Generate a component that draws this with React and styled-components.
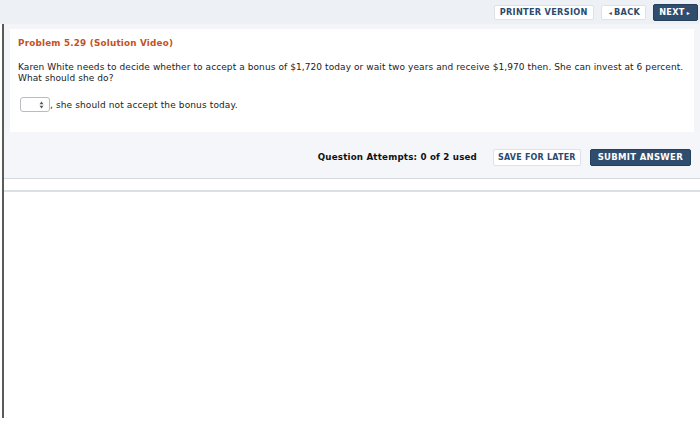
import React from "react";
import styled, { createGlobalStyle } from "styled-components";

const GlobalStyle = createGlobalStyle`
  html, body {
    margin: 0;
    padding: 0;
    background: #ffffff;
    font-family: "DejaVu Sans", Verdana, sans-serif;
  }
`;

export default function App() {
  return (
    <>
      <GlobalStyle />
      <Page>
        <TopBar>
          <LightButton>PRINTER VERSION</LightButton>
          <LightButton>
            <Arrow>◂</Arrow>BACK
          </LightButton>
          <DarkButton>
            NEXT<Arrow>▸</Arrow>
          </DarkButton>
        </TopBar>
        <Frame>
          <Shade>
            <Card>
              <Title>Problem 5.29 (Solution Video)</Title>
              <Text>
                Karen White needs to decide whether to accept a bonus of $1,720
                today or wait two years and receive $1,970 then. She can invest
                at 6 percent. What should she do?
              </Text>
              <AnswerRow>
                <Select>
                  <SelectArrows viewBox="0 0 6 10">
                    <path d="M3 0.5 L5.5 4 H0.5 Z" fill="#555" />
                    <path d="M3 9.5 L5.5 6 H0.5 Z" fill="#555" />
                  </SelectArrows>
                </Select>
                <span>, she should not accept the bonus today.</span>
              </AnswerRow>
            </Card>
          </Shade>
          <Footer>
            <Attempts>Question Attempts: 0 of 2 used</Attempts>
            <SaveButton>SAVE FOR LATER</SaveButton>
            <DarkButton $wide>SUBMIT ANSWER</DarkButton>
          </Footer>
          <Spacer />
          <Rest />
        </Frame>
      </Page>
    </>
  );
}

const Page = styled.div`
  width: 700px;
  height: 426px;
  overflow: hidden;
  display: flex;
  flex-direction: column;
  background: #ffffff;
`;

const TopBar = styled.div`
  height: 24px;
  background: #edf0f5;
  display: flex;
  align-items: center;
  justify-content: flex-end;
  gap: 7px;
  padding-right: 2px;
  flex-shrink: 0;
`;

const ButtonBase = styled.div`
  height: 15px;
  padding: 0 5px;
  display: flex;
  align-items: center;
  font-family: "DejaVu Sans", Verdana, sans-serif;
  font-size: 8.2px;
  font-weight: bold;
  letter-spacing: 0.3px;
  border-radius: 2px;
  box-sizing: border-box;
`;

const LightButton = styled(ButtonBase)`
  background: #ffffff;
  color: #2c4a6e;
  border: 1px solid #dde2ea;
`;

const SaveButton = styled(LightButton)`
  height: 17px;
  font-size: 8px;
  letter-spacing: 0.2px;
  padding: 0 4px;
  margin-left: 7px;
`;

const DarkButton = styled(ButtonBase)`
  background: #304d6d;
  color: #ffffff;
  border: 1px solid #25405d;
  height: 17px;
  padding: 0 ${(p) => (p.$wide ? 7 : 5)}px;
  font-size: ${(p) => (p.$wide ? 8.5 : 8.2)}px;
`;

const Arrow = styled.span`
  font-size: 6px;
  margin: 0 2px;
`;

const Frame = styled.div`
  flex: 1;
  display: flex;
  flex-direction: column;
  border-left: 2px solid #5a5a5a;
  margin-left: 2px;
  margin-bottom: 8px;
`;

const Shade = styled.div`
  background: #f3f5f9;
  padding: 5px 6px 0 6px;
`;

const Card = styled.div`
  background: #ffffff;
  padding: 9px 4px 20px 8px;
  color: #222;
`;

const Title = styled.div`
  color: #c4521e;
  font-size: 8.8px;
  line-height: 11px;
  letter-spacing: 0.2px;
  font-weight: bold;
  margin-bottom: 13px;
`;

const Text = styled.div`
  font-size: 9px;
  letter-spacing: 0.08px;
  line-height: 11px;
  margin-bottom: 13px;
`;

const AnswerRow = styled.div`
  display: flex;
  align-items: center;
  font-size: 9px;
  letter-spacing: 0.12px;
`;

const Select = styled.div`
  width: 30px;
  height: 15px;
  border: 1px solid #b8bcc2;
  border-radius: 3px;
  box-sizing: border-box;
  display: flex;
  align-items: center;
  justify-content: flex-end;
  padding-right: 5px;
  margin-left: 2px;
  background: #fff;
`;

const SelectArrows = styled.svg`
  width: 5px;
  height: 8px;
`;

const Footer = styled.div`
  height: 47px;
  background: #f4f6fa;
  border-bottom: 1px solid #d6dae0;
  box-sizing: border-box;
  display: flex;
  align-items: center;
  justify-content: flex-end;
  padding-right: 9px;
  gap: 9px;
  padding-top: 4px;
`;

const Attempts = styled.div`
  font-size: 8.7px;
  letter-spacing: 0.2px;
  font-weight: bold;
  color: #111;
`;

const Spacer = styled.div`
  height: 11px;
  border-bottom: 2px solid #dcdfe4;
`;

const Rest = styled.div`
  flex: 1;
`;
